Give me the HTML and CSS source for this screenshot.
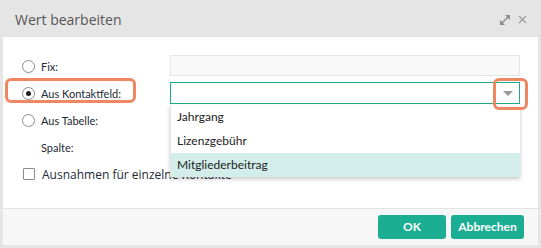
FILE: index.html
```html
<!DOCTYPE html>
<html lang="de">
<head>
    <meta charset="UTF-8">
    <title>Wert bearbeiten</title>
    <link rel="stylesheet" href="styles.css">
</head>
<body>
    <div class="dialog">
        <!-- Titelleiste -->
        <div class="titlebar">
            <span class="title">Wert bearbeiten</span>
            <div class="title-actions">
                <svg class="icon-expand" width="12" height="12" viewBox="0 0 12 12">
                    <line x1="3" y1="9" x2="9" y2="3" stroke="#8c8c8c" stroke-width="1.4"/>
                    <polygon points="11,1 11,6 6,1" fill="#8c8c8c"/>
                    <polygon points="1,11 1,6 6,11" fill="#8c8c8c"/>
                </svg>
                <svg class="icon-close" width="9" height="9" viewBox="0 0 9 9">
                    <path d="M1 1 L8 8 M8 1 L1 8" stroke="#9a9a9a" stroke-width="1.2"/>
                </svg>
            </div>
        </div>

        <!-- Inhalt -->
        <div class="content">
            <div class="form">
                <label class="opt">
                    <span class="radio"></span>
                    <span>Fix:</span>
                </label>
                <div class="field">
                    <div class="input disabled"></div>
                </div>

                <label class="opt">
                    <span class="radio checked"></span>
                    <span>Aus Kontaktfeld:</span>
                    <span class="mark mark-label"></span>
                </label>
                <div class="field">
                    <div class="input select">
                        <span class="arrow"></span>
                    </div>
                    <span class="mark mark-arrow"></span>
                    <ul class="dropdown">
                        <li>Jahrgang</li>
                        <li>Lizenzgebühr</li>
                        <li class="active">Mitgliederbeitrag</li>
                    </ul>
                </div>

                <label class="opt">
                    <span class="radio"></span>
                    <span>Aus Tabelle:</span>
                </label>
                <div class="field"></div>

                <div class="opt sub">Spalte:</div>
                <div class="field"></div>

                <label class="opt wide">
                    <span class="checkbox"></span>
                    <span>Ausnahmen für einzelne Kontakte</span>
                </label>
            </div>
        </div>

        <!-- Fußzeile -->
        <div class="footer">
            <button class="btn ok">OK</button>
            <button class="btn">Abbrechen</button>
        </div>
    </div>
</body>
</html>
```

FILE: styles.css
```css
body {
    margin: 0;
    padding: 0;
    background-color: #e5e5e5;
    font-family: 'Open Sans', 'Noto Sans', sans-serif;
    color: #232a36;
}

.dialog {
    width: 535px;
    height: 245px;
    margin-left: 3px;
    display: flex;
    flex-direction: column;
}

.titlebar {
    height: 37px;
    display: flex;
    align-items: center;
    justify-content: space-between;
    padding: 0 11px 0 12px;
    box-sizing: border-box;
}

.title {
    font-size: 14px;
    color: #555;
    margin-top: 2px;
}

.title-actions {
    display: flex;
    align-items: center;
    gap: 7px;
    margin-top: 2px;
}

.content {
    flex: 1;
    background-color: #fff;
    padding: 18px 18px 0 19px;
}

.form {
    display: grid;
    grid-template-columns: 148px 350px;
    grid-auto-rows: 22px;
    row-gap: 5px;
    font-family: 'Lato', sans-serif;
    font-size: 11px;
}

.opt {
    display: flex;
    align-items: center;
    gap: 6px;
    position: relative;
}

.opt.sub {
    padding-left: 19px;
}

.opt.wide {
    grid-column: 1 / 3;
    font-family: 'Open Sans', sans-serif;
    font-size: 12px;
    padding-left: 1px;
    gap: 7px;
}

.radio {
    width: 11px;
    height: 11px;
    border: 1px solid #8a8a8a;
    border-radius: 50%;
    display: flex;
    align-items: center;
    justify-content: center;
    flex-shrink: 0;
}

.radio.checked::after {
    content: '';
    width: 5px;
    height: 5px;
    background-color: #222;
    border-radius: 50%;
}

.checkbox {
    width: 10px;
    height: 10px;
    border: 1px solid #8a8a8a;
    border-radius: 1px;
    flex-shrink: 0;
}

.field {
    position: relative;
}

.input {
    height: 22px;
    box-sizing: border-box;
    border: 1px solid #e6e6e6;
}

.input.disabled {
    background-color: #f9f9f9;
    height: 21px;
}

.input.select {
    border-color: #1fa98b;
    display: flex;
    align-items: center;
    justify-content: flex-end;
    padding-right: 6px;
}

.arrow {
    width: 0;
    height: 0;
    border-left: 5px solid transparent;
    border-right: 5px solid transparent;
    border-top: 5px solid #999;
}

.dropdown {
    position: absolute;
    top: 23px;
    left: 0;
    width: 350px;
    margin: 0;
    padding: 0;
    list-style: none;
    background-color: #fff;
    box-shadow: 0 2px 4px rgba(0, 0, 0, 0.22);
    border-left: 1px solid #e4e4e4;
    box-sizing: border-box;
    z-index: 2;
    font-family: 'Lato', sans-serif;
    font-size: 12px;
    color: #222;
}

.dropdown li {
    height: 24px;
    line-height: 24px;
    padding-left: 6px;
}

.dropdown li.active {
    background-color: #d3eeea;
}

/* Markierungen */
.mark {
    position: absolute;
    border: 3px solid #ef8762;
    border-radius: 6px;
    box-sizing: border-box;
    z-index: 3;
}

.mark-label {
    left: -17px;
    top: -4px;
    width: 131px;
    height: 25px;
}

.mark-arrow {
    left: 323px;
    top: -4px;
    width: 35px;
    height: 32px;
}

.footer {
    height: 37px;
    background-color: #f7f7f7;
    border-top: 1px solid #e3e3e3;
    box-sizing: border-box;
    display: flex;
    align-items: center;
    justify-content: flex-end;
    gap: 5px;
    padding: 0 14px 1px 0;
}

.btn {
    height: 24px;
    border: none;
    border-radius: 3px;
    background-color: #1cae92;
    color: #fff;
    font-family: 'Lato', sans-serif;
    font-weight: bold;
    font-size: 12px;
    padding: 0;
    width: 73px;
}

.btn.ok {
    width: 68px;
}
```
